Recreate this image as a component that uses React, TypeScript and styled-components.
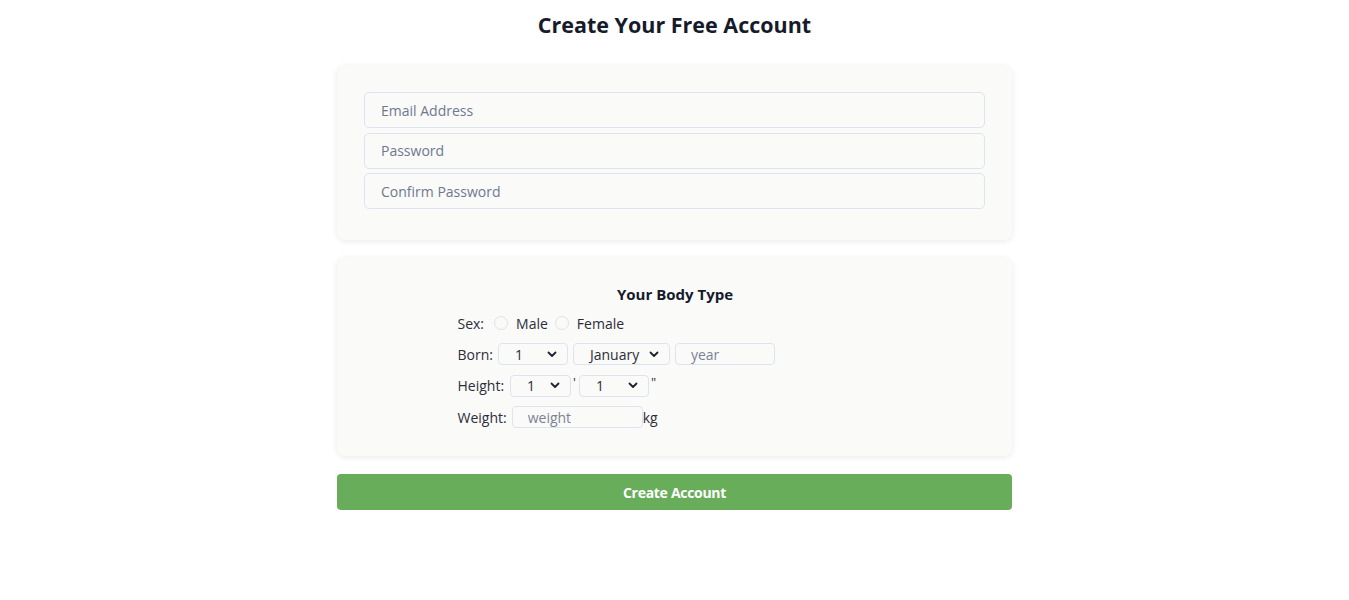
import React from "react";
import styled, { createGlobalStyle } from "styled-components";

const Global = createGlobalStyle`
  html, body { margin: 0; padding: 0; background: #ffffff; }
  body { font-family: "Open Sans", "Noto Sans", sans-serif; color: #2d2d3a; }
  * { box-sizing: border-box; }
`;

const Page = styled.main`
  width: 675px;
  margin: 0 auto;
  padding-top: 10px;
  display: flex;
  flex-direction: column;
`;

const Title = styled.h1`
  margin: 0 0 26px;
  text-align: center;
  font-size: 21.5px;
  line-height: 30px;
  font-weight: 700;
  color: #161b2b;
`;

const Card = styled.section<{ $pad: string }>`
  background: #fafaf9;
  border-radius: 8px;
  box-shadow: 0 1px 6px rgba(0, 0, 0, 0.09);
  padding: ${(p) => p.$pad};
  margin-bottom: 18px;
`;

const FieldStack = styled.div`
  display: flex;
  flex-direction: column;
  gap: 4.5px;
`;

const TextInput = styled.input`
  height: 36px;
  width: 100%;
  border: 1px solid #dde3ef;
  border-radius: 5px;
  background: #fafaf9;
  padding: 0 16px;
  font-family: "Open Sans", sans-serif;
  font-size: 14px;
  color: #2d2d3a;
  outline: none;
  &::placeholder { color: #6f7890; }
`;

const BodyBlock = styled.div`
  width: 436px;
  margin: 0 auto;
  padding-left: 1px;
  display: flex;
  flex-direction: column;
`;

const SubTitle = styled.h2`
  margin: 0 0 4px;
  text-align: center;
  font-size: 15px;
  line-height: 22px;
  font-weight: 700;
  color: #161b2b;
`;

const Row = styled.div<{ $h: number }>`
  display: flex;
  align-items: center;
  height: ${(p) => p.$h}px;
  font-size: 14px;
  color: #2d2d3a;
  white-space: nowrap;
`;

const Label = styled.span<{ $gap: number }>`
  margin-right: ${(p) => p.$gap}px;
`;

const Radio = styled.span`
  width: 14px;
  height: 14px;
  border-radius: 50%;
  border: 1px solid #dfe3ea;
  background: #fafaf9;
  margin-right: 8px;
  margin-left: 4px;
`;

const RadioText = styled.span`
  margin-right: 3px;
`;

const Select = styled.div<{ $w: number; $pl: number }>`
  width: ${(p) => p.$w}px;
  height: 22px;
  border: 1px solid #dde3ef;
  border-radius: 4px;
  display: flex;
  align-items: center;
  justify-content: space-between;
  padding: 0 10px 0 ${(p) => p.$pl}px;
  font-size: 14px;
  color: #2d2d3a;
  margin-right: 5px;
`;

const SmallInput = styled.input<{ $w: number }>`
  width: ${(p) => p.$w}px;
  height: 22px;
  border: 1px solid #dde3ef;
  border-radius: 4px;
  background: #fafaf9;
  padding: 0 15px;
  font-family: "Open Sans", sans-serif;
  font-size: 14px;
  outline: none;
  &::placeholder { color: #7a8296; }
`;

const Mark = styled.span`
  margin: 0 3px 0 -3px;
  font-size: 13px;
  align-self: flex-start;
  margin-top: 2px;
`;

const Button = styled.button`
  height: 36px;
  width: 100%;
  border: none;
  border-radius: 4px;
  background: #68ad5a;
  color: #ffffff;
  font-family: "Open Sans", sans-serif;
  font-weight: 700;
  font-size: 14px;
  letter-spacing: -0.3px;
`;

const Chevron = () => (
  <svg width="10" height="7" viewBox="0 0 10 7" fill="none">
    <path d="M1.5 1.5 L5 5 L8.5 1.5" stroke="#1f2330" strokeWidth="1.8" strokeLinecap="round" strokeLinejoin="round" />
  </svg>
);

export default function App() {
  return (
    <>
      <Global />
      <Page>
        <Title>Create Your Free Account</Title>
        <Card $pad="26px 27px 31px">
          <FieldStack>
            <TextInput placeholder="Email Address" />
            <TextInput placeholder="Password" />
            <TextInput placeholder="Confirm Password" />
          </FieldStack>
        </Card>
        <Card $pad="25px 0 22px">
          <BodyBlock>
            <SubTitle>Your Body Type</SubTitle>
            <Row $h={28}>
              <Label $gap={6}>Sex:</Label>
              <Radio />
              <RadioText>Male</RadioText>
              <Radio />
              <RadioText>Female</RadioText>
            </Row>
            <Row $h={34}>
              <Label $gap={5}>Born:</Label>
              <Select $w={70} $pl={16}>1<Chevron /></Select>
              <Select $w={97} $pl={16}>January<Chevron /></Select>
              <SmallInput $w={100} placeholder="year" />
            </Row>
            <Row $h={29}>
              <Label $gap={6}>Height:</Label>
              <Select $w={61} $pl={16}>1<Chevron /></Select>
              <Mark>'</Mark>
              <Select $w={70} $pl={16}>1<Chevron /></Select>
              <Mark>"</Mark>
            </Row>
            <Row $h={34}>
              <Label $gap={5}>Weight:</Label>
              <SmallInput $w={131} placeholder="weight" />
              <span>kg</span>
            </Row>
          </BodyBlock>
        </Card>
        <Button>Create Account</Button>
      </Page>
    </>
  );
}
